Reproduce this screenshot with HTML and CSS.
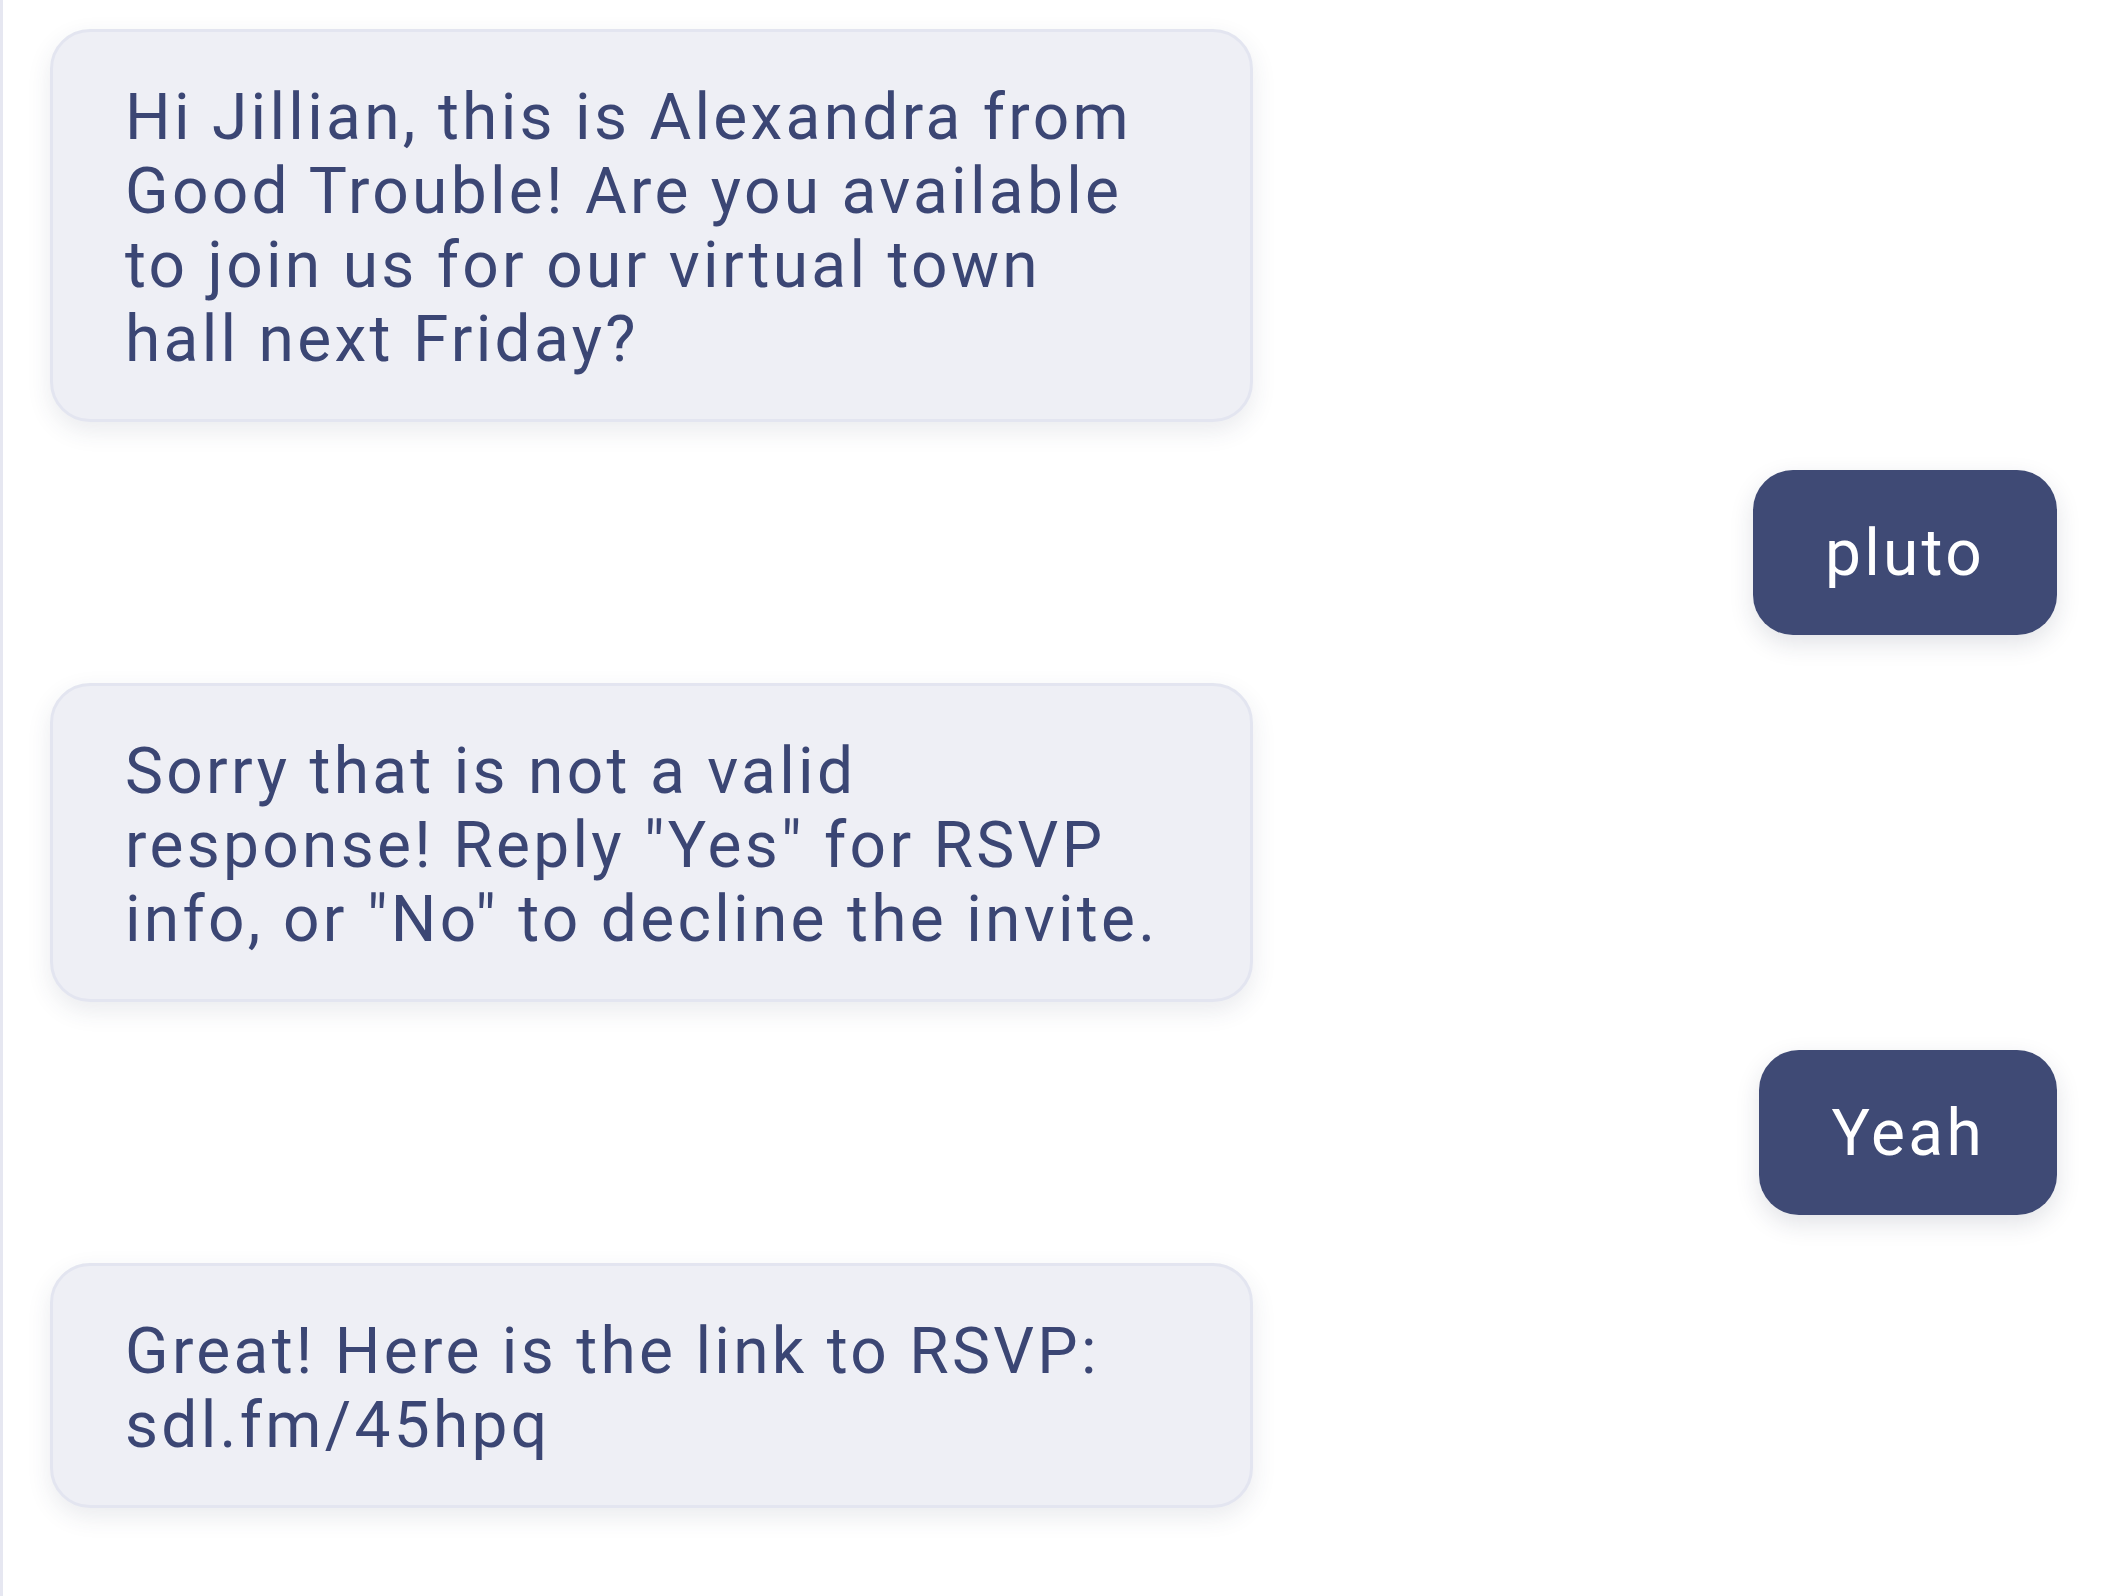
FILE: index.html
```html
<!DOCTYPE html>
<html lang="en">
<head>
<meta charset="utf-8">
<title>Conversation</title>
<link rel="stylesheet" href="styles.css">
</head>
<body>
<div class="chat">
  <div class="msg msg-in">Hi Jillian, this is Alexandra from<br>Good Trouble! Are you available<br>to join us for our virtual town<br>hall next Friday?</div>
  <div class="msg msg-out">pluto</div>
  <div class="msg msg-in">Sorry that is not a valid<br>response! Reply "Yes" for RSVP<br>info, or "No" to decline the invite.</div>
  <div class="msg msg-out">Yeah</div>
  <div class="msg msg-in">Great! Here is the link to RSVP:<br>sdl.fm/45hpq</div>
</div>
</body>
</html>
```
FILE: styles.css
```css
html, body {
  margin: 0;
  padding: 0;
  background: #ffffff;
}

.chat {
  box-sizing: border-box;
  min-height: 100vh;
  border-left: 3px solid #e6e7f1;
  padding: 29px 46px 40px 47px;
  display: flex;
  flex-direction: column;
  gap: 48px;
  font-family: Roboto, "Liberation Sans", sans-serif;
  font-size: 64px;
  line-height: 74px;
  letter-spacing: 3.3px;
}

.msg {
  box-sizing: border-box;
  border-radius: 40px;
  white-space: nowrap;
}

.msg-in {
  align-self: flex-start;
  width: 1203px;
  padding: 49px 72px 42px;
  background: #eeeff5;
  border: 3px solid #e3e5f0;
  color: #3b4674;
  box-shadow: 0 9px 24px rgba(50, 55, 90, 0.10);
}

.msg-out {
  align-self: flex-end;
  padding: 47px 72px 44px;
  background: #3f4a75;
  color: #ffffff;
  box-shadow: 0 9px 24px rgba(30, 35, 70, 0.13);
}
```
